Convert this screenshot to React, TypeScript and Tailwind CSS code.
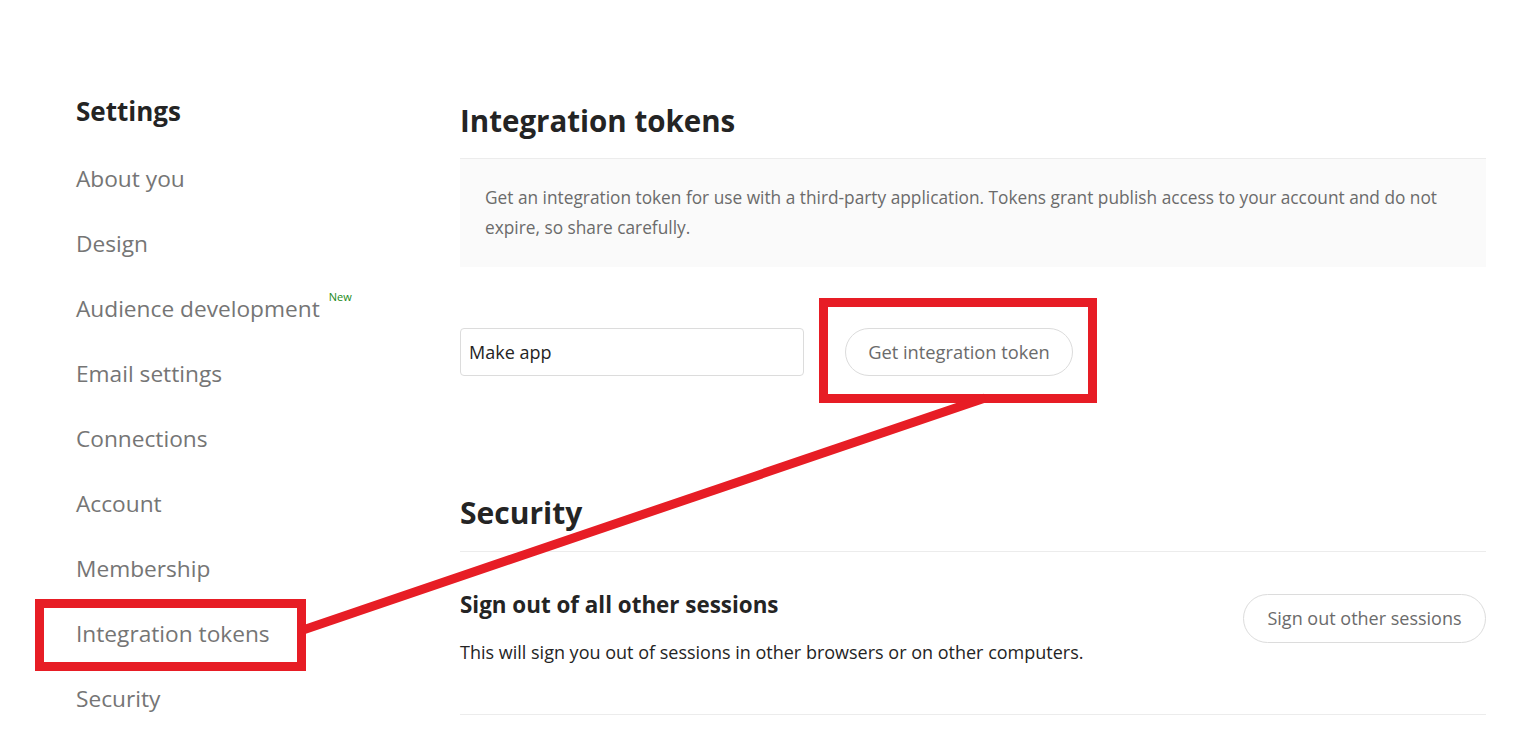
import React from 'react';

const navItems = [
  'About you',
  'Design',
  'Audience development',
  'Email settings',
  'Connections',
  'Account',
  'Membership',
  'Integration tokens',
  'Security',
];

function Annotations() {
  // red callout drawn on top of the screenshot
  return (
    <svg
      className="pointer-events-none absolute left-0 top-0"
      width="1522"
      height="745"
      viewBox="0 0 1522 745"
    >
      <g fill="none" stroke="#e71d25" strokeWidth="9">
        <rect x="823.5" y="302.5" width="269" height="96" />
        <rect x="39.5" y="603.5" width="262" height="63" />
        <line x1="985" y1="398" x2="303" y2="630" />
      </g>
    </svg>
  );
}

export default function App() {
  return (
    <div
      className="relative min-h-[745px] w-full overflow-hidden bg-white"
      style={{ fontFamily: '"Open Sans", "Noto Sans", sans-serif' }}
    >
      <div className="flex pl-[76px] pt-[95px]">
        {/* Sidebar */}
        <aside className="w-[384px] shrink-0">
          <h2 className="mb-[20px] text-[26px] font-bold leading-[32px] text-[#242424]">Settings</h2>
          <ul>
            {navItems.map((item) => (
              <li key={item} className="flex h-[65px] items-center text-[22.7px] text-[#757575]">
                <span className="relative">
                  {item}
                  {item === 'Audience development' && (
                    <sup className="absolute -right-[32px] top-[5px] text-[11px] text-[#1a8917]">New</sup>
                  )}
                </span>
              </li>
            ))}
          </ul>
        </aside>

        {/* Main */}
        <main className="w-[1026px] pt-[6px]">
          <h1 className="mb-[17px] text-[29.5px] font-bold leading-[40px] text-[#242424]">Integration tokens</h1>
          <div className="border-t border-[#ececec] bg-[#fafafa] px-[25px] py-[24px]">
            <p className="text-[17.3px] leading-[30px] text-[#6b6b6b]">
              Get an integration token for use with a third-party application. Tokens grant publish access to your account and do not
              expire, so share carefully.
            </p>
          </div>

          <div className="mt-[61px] flex items-center gap-[41px]">
            <input
              readOnly
              value="Make app"
              className="h-[48px] w-[344px] rounded-[4px] border border-[#dcdcdc] px-[8px] text-[18px] text-[#242424] outline-none"
            />
            <button className="h-[48px] w-[228px] rounded-full border border-[#dcdcdc] text-[18.3px] text-[#6b6b6b]">
              Get integration token
            </button>
          </div>

          <h1 className="mt-[117px] mb-[18px] text-[30px] font-bold leading-[40px] text-[#242424]">Security</h1>
          <div className="flex items-start justify-between border-t border-b border-[#ececec] pt-[38px] pb-[49px]">
            <div>
              <h3 className="text-[22.4px] font-bold leading-[30px] text-[#242424]">Sign out of all other sessions</h3>
              <p className="mt-[19px] text-[18px] leading-[26px] text-[#242424]">
                This will sign you out of sessions in other browsers or on other computers.
              </p>
            </div>
            <button className="mt-[4px] h-[49px] w-[243px] rounded-full border border-[#dcdcdc] text-[18px] text-[#6b6b6b]">
              Sign out other sessions
            </button>
          </div>
        </main>
      </div>
      <Annotations />
    </div>
  );
}
